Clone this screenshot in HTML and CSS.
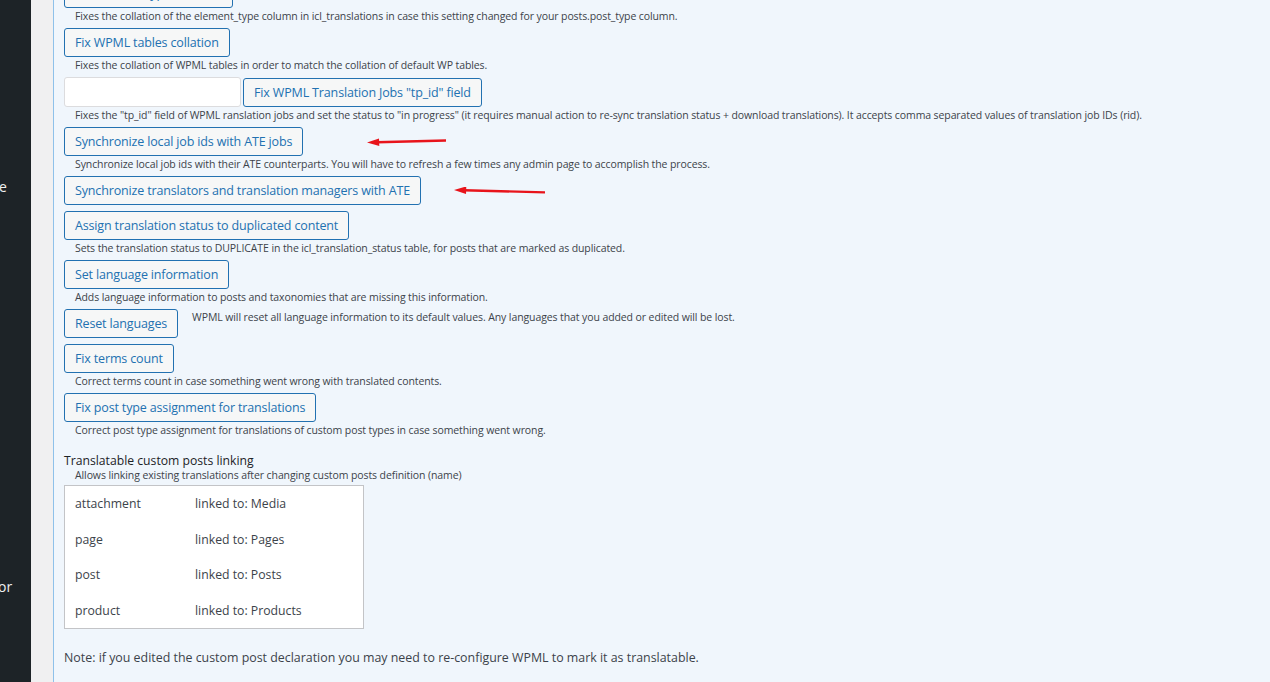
FILE: index.html
```html
<!DOCTYPE html>
<html lang="en">
  <head>
    <meta charset="UTF-8" />
    <meta name="viewport" content="width=device-width, initial-scale=1.0" />
    <title>WPML Troubleshooting</title>
    <link rel="stylesheet" href="styles.css">
  </head>
  <body>
    <div class="admin-menu">
      <div class="menu-stub first">e</div>
      <div class="menu-stub second">or</div>
    </div>
    <div class="gutter"></div>
    <div class="panel">
      <div class="tools">
        <div class="tool">
          <button class="btn">Fix element_type collation</button>
          <p class="desc">Fixes the collation of the element_type column in icl_translations in case this setting changed for your posts.post_type column.</p>
        </div>
        <div class="tool">
          <button class="btn">Fix WPML tables collation</button>
          <p class="desc">Fixes the collation of WPML tables in order to match the collation of default WP tables.</p>
        </div>
        <div class="tool">
          <div class="row">
            <input type="text" class="field" />
            <button class="btn">Fix WPML Translation Jobs "tp_id" field</button>
          </div>
          <p class="desc">Fixes the "tp_id" field of WPML ranslation jobs and set the status to "in progress" (it requires manual action to re-sync translation status + download translations). It accepts comma separated values of translation job IDs (rid).</p>
        </div>
        <div class="tool">
          <div class="row">
            <button class="btn">Synchronize local job ids with ATE jobs</button>
            <svg class="arrow arrow-one" width="80" height="8" viewBox="0 0 80 8">
              <path d="M79 2.5 L10 4.2" stroke="#e8141b" stroke-width="2.4" fill="none" />
              <path d="M0 4.6 L12 0.6 L12.3 8 Z" fill="#e8141b" />
            </svg>
          </div>
          <p class="desc">Synchronize local job ids with their ATE counterparts. You will have to refresh a few times any admin page to accomplish the process.</p>
        </div>
        <div class="tool">
          <div class="row">
            <button class="btn">Synchronize translators and translation managers with ATE</button>
            <svg class="arrow arrow-two" width="92" height="8" viewBox="0 0 92 8">
              <path d="M91 5.4 L10 3.2" stroke="#e8141b" stroke-width="2.4" fill="none" />
              <path d="M0 3 L12.3 -0.6 L12 7 Z" fill="#e8141b" />
            </svg>
          </div>
        </div>
        <div class="tool">
          <button class="btn">Assign translation status to duplicated content</button>
          <p class="desc">Sets the translation status to DUPLICATE in the icl_translation_status table, for posts that are marked as duplicated.</p>
        </div>
        <div class="tool">
          <button class="btn">Set language information</button>
          <p class="desc">Adds language information to posts and taxonomies that are missing this information.</p>
        </div>
        <div class="tool">
          <div class="row top">
            <button class="btn">Reset languages</button>
            <p class="desc side">WPML will reset all language information to its default values. Any languages that you added or edited will be lost.</p>
          </div>
        </div>
        <div class="tool">
          <button class="btn">Fix terms count</button>
          <p class="desc">Correct terms count in case something went wrong with translated contents.</p>
        </div>
        <div class="tool">
          <button class="btn">Fix post type assignment for translations</button>
          <p class="desc">Correct post type assignment for translations of custom post types in case something went wrong.</p>
        </div>
      </div>

      <div class="linking">
        <h4>Translatable custom posts linking</h4>
        <p class="desc">Allows linking existing translations after changing custom posts definition (name)</p>
        <table class="links">
          <tr><td>attachment</td><td>linked to: Media</td></tr>
          <tr><td>page</td><td>linked to: Pages</td></tr>
          <tr><td>post</td><td>linked to: Posts</td></tr>
          <tr><td>product</td><td>linked to: Products</td></tr>
        </table>
        <p class="note">Note: if you edited the custom post declaration you may need to re-configure WPML to mark it as translatable.</p>
      </div>
    </div>
  </body>
</html>
```

FILE: styles.css
```css
body {
  margin: 0;
  display: flex;
  height: 100vh;
  overflow: hidden;
  font-family: "Open Sans", "Noto Sans", sans-serif;
  color: #3c434a;
}
.admin-menu {
  width: 31px;
  background-color: #1d2327;
  color: #f0f0f1;
  font-size: 14px;
  line-height: 18px;
  overflow: hidden;
}
.menu-stub {
  margin-left: -1px;
}
.menu-stub.first {
  margin-top: 178px;
}
.menu-stub.second {
  margin-top: 382px;
  margin-left: -2px;
}
.gutter {
  width: 22px;
  background-color: #f0f0f1;
}
.panel {
  flex: 1;
  background-color: #f0f6fc;
  border-left: 1px solid #8ec1ea;
  padding-left: 10px;
}
.tools {
  margin-top: -21px;
}
.tool {
  margin-bottom: 6px;
}
.row {
  display: flex;
  align-items: center;
  gap: 2px;
}
.row.top {
  align-items: flex-start;
}
.btn {
  height: 29px;
  padding: 0 10px;
  font-family: inherit;
  font-size: 12.5px;
  letter-spacing: -0.15px;
  color: #2271b1;
  background-color: #f6f7f7;
  border: 1px solid #2271b1;
  border-radius: 3px;
  cursor: pointer;
}
.field {
  width: 177px;
  height: 30px;
  box-sizing: border-box;
  border: 1px solid #dcdcde;
  border-radius: 3px;
  background-color: #fff;
}
.desc {
  margin: 2px 0 0 11px;
  font-size: 10.5px;
  line-height: 12px;
  letter-spacing: -0.1px;
  color: #3c434a;
}
.desc.side {
  margin: 2px 0 0 12px;
}
.arrow-one {
  margin-left: 62px;
}
.arrow-two {
  margin-left: 31px;
}
.linking {
  margin-top: 18px;
}
.linking h4 {
  margin: 0;
  font-size: 12.2px;
  font-weight: normal;
  line-height: 14px;
  color: #1d2327;
}
.linking .desc {
  margin-top: 1px;
}
.links {
  margin-top: 4px;
  width: 300px;
  border: 1px solid #c3c4c7;
  border-collapse: collapse;
  background-color: #fff;
  font-size: 12.25px;
}
.links td {
  height: 35.5px;
  padding: 0 10px;
  color: #3c434a;
}
.links td:first-child {
  width: 100px;
}
.note {
  margin: 20px 0 0;
  font-size: 12.4px;
  color: #3c434a;
}
```
